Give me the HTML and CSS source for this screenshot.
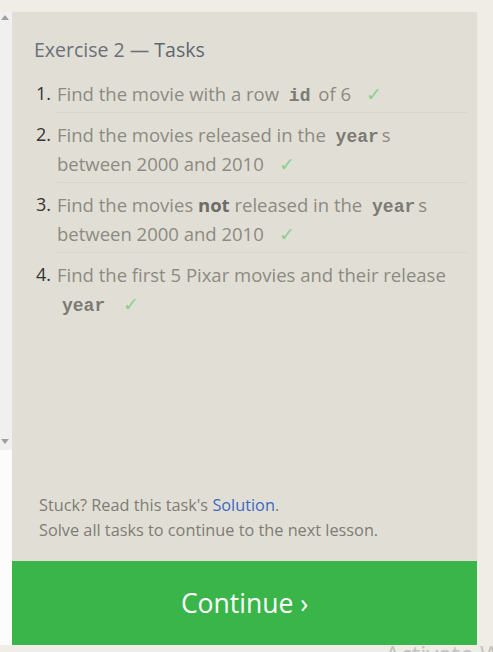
FILE: index.html
```html
<!DOCTYPE html>
<html>
<head>
<meta charset="utf-8">
<link rel="stylesheet" href="styles.css">
</head>
<body>
<div class="page">
  <div class="side">
    <div class="scroll">
      <span class="tri tri-up"></span>
      <span class="tri tri-down"></span>
    </div>
    <div class="side-white"></div>
  </div>
  <div class="main">
    <div class="panel">
      <h2 class="title">Exercise 2 — <span class="strong">Tasks</span></h2>
      <ol class="tasks">
        <li><span class="num">1.</span><span class="txt">Find the movie with a row <code>id</code> of 6 <span class="check">✓</span></span></li>
        <li><span class="num">2.</span><span class="txt">Find the movies released in the <code>year</code>s between 2000 and 2010 <span class="check">✓</span></span></li>
        <li><span class="num">3.</span><span class="txt">Find the movies <b>not</b> released in the <code>year</code>s between 2000 and 2010 <span class="check">✓</span></span></li>
        <li class="last"><span class="num">4.</span><span class="txt">Find the first 5 Pixar movies and their release <code>year</code> <span class="check">✓</span></span></li>
      </ol>
      <div class="help">
        <p>Stuck? Read this task's <a href="#">Solution</a>.</p>
        <p>Solve all tasks to continue to the next lesson.</p>
      </div>
    </div>
    <div class="continue">Continue ›</div>
  </div>
  <div class="right"></div>
</div>
<div class="bottom"><span class="watermark">Activate W</span></div>
</body>
</html>
```

FILE: styles.css
```css
html, body {
  margin: 0;
  padding: 0;
  background: #efede6;
  width: 493px;
  height: 652px;
  overflow: hidden;
  font-family: "Open Sans", "Noto Sans", sans-serif;
}
.page {
  display: flex;
  padding-top: 12px;
  height: 633px;
}
.side {
  width: 12px;
  display: flex;
  flex-direction: column;
}
.scroll {
  height: 438px;
  background: #f0f0f0;
  position: relative;
}
.side-white {
  flex: 1;
  background: #fcfcfc;
}
.tri {
  position: absolute;
  left: 1px;
  width: 0;
  height: 0;
  border-left: 4px solid transparent;
  border-right: 4px solid transparent;
}
.tri-up {
  top: 3px;
  border-bottom: 5px solid #a0a0a0;
}
.tri-down {
  bottom: 6px;
  border-top: 5px solid #a0a0a0;
}
.main {
  width: 465px;
  display: flex;
  flex-direction: column;
}
.panel {
  flex: 1;
  background: #e1dfd5;
  padding: 24px 10px 0 22px;
  display: flex;
  flex-direction: column;
  box-shadow: 0 0 2px rgba(0,0,0,0.04);
}
.title {
  margin: 0 0 8px 0;
  font-weight: normal;
  font-size: 19.5px;
  line-height: 28px;
  color: #6a7079;
}
.title .strong {
  color: #5d6670;
}
.tasks {
  list-style: none;
  margin: 0;
  padding: 0;
}
.tasks li {
  display: flex;
  padding: 7px 0 4px 0;
  border-bottom: 1px solid #d7d5cb;
  margin-left: 23px;
  position: relative;
}
.tasks li.last {
  border-bottom: none;
}
.num {
  position: absolute;
  left: -21px;
  color: #333;
  font-size: 18px;
  line-height: 29px;
}
.txt {
  font-size: 18.5px;
  line-height: 29px;
  color: #8c8a82;
}
code {
  font-family: "Liberation Mono", "DejaVu Sans Mono", monospace;
  font-weight: bold;
  font-size: 18px;
  line-height: 1;
  color: #7b7a74;
  padding: 0 3px 0 5px;
}
b {
  color: #6e6c66;
}
.check {
  color: #8ccf8f;
  margin-left: 10px;
}
.help {
  margin-top: auto;
  padding: 0 0 18px 5px;
  font-size: 16.3px;
  line-height: 25px;
  color: #7e7c75;
}
.help p {
  margin: 0;
}
.help a {
  color: #3d68c2;
  text-decoration: none;
}
.continue {
  height: 84px;
  background: #39b54a;
  color: #fff;
  font-size: 26.5px;
  display: flex;
  align-items: center;
  justify-content: center;
}
.right {
  width: 16px;
}
.bottom {
  height: 7px;
  overflow: hidden;
  padding-left: 385px;
  white-space: nowrap;
}
.watermark {
  display: block;
  font-size: 24px;
  line-height: 24px;
  margin-top: -3px;
  color: #c4c2bc;
}
```
